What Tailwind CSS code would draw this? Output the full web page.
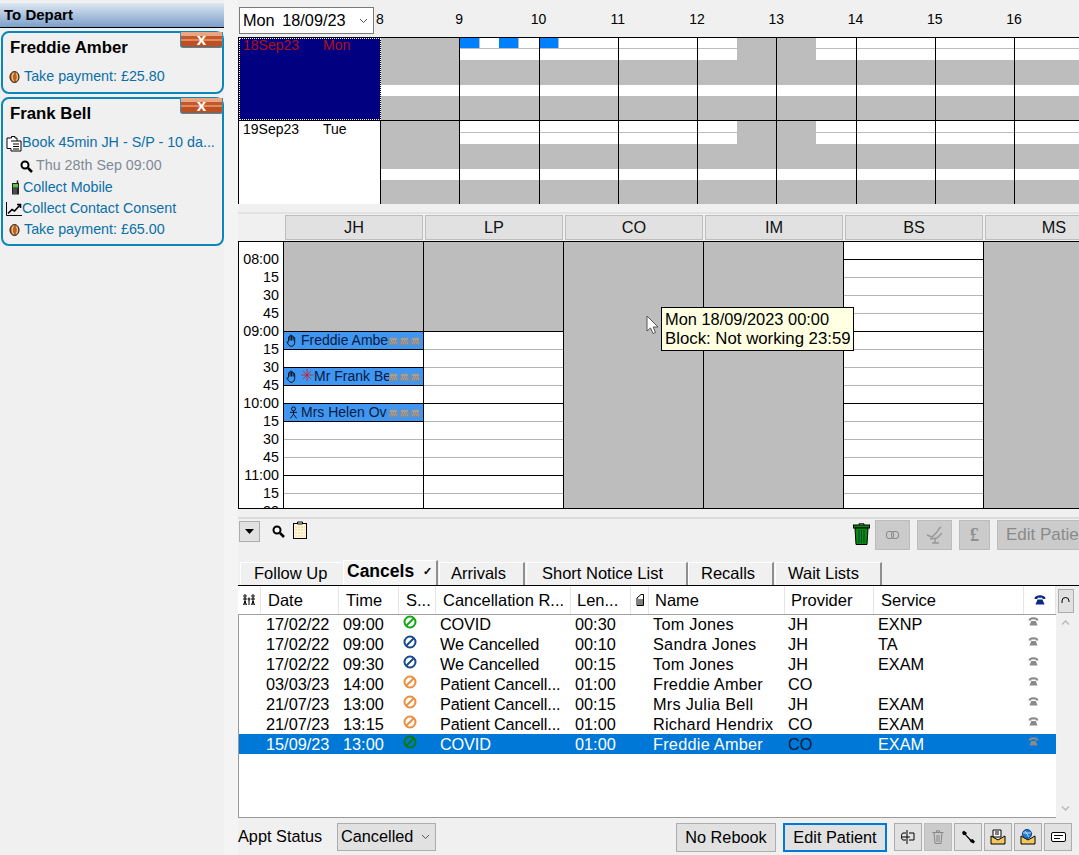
<!DOCTYPE html>
<html lang="en">
<head>
<meta charset="UTF-8">
<title>Appointments</title>
<script src="https://cdn.jsdelivr.net/npm/@tailwindcss/browser@4"></script>
</head>
<body class="w-[1079px] h-[855px] overflow-hidden bg-[#f0f0f0] text-black font-['Liberation_Sans',Arial,sans-serif]">

<svg class="hidden">
  <symbol id="phone" viewBox="0 0 12 10"><path fill="currentColor" d="M.5 4C.5 1 4 .3 6 .3S11.500 1 11.500 4H8.500V2.800H3.500V4ZM3.500 4.500H8.500L10.500 9.500H1.500Z"/></symbol>
  <symbol id="phoneblock" viewBox="0 0 9 8"><path fill="currentColor" d="M0 3C0 1 2.500 0 4.500 0S9 1 9 3V8H0Z"/><path d="M1 2H8M2 4H3M4 4H5M6 4H7M1 6H2M3 6H4M5 6H6M7 6H8" stroke="#b5b5b5"/></symbol>
  <symbol id="coin" viewBox="0 0 12 14"><ellipse cx="6" cy="7" rx="5" ry="6" fill="#b8621e" stroke="#1a1a1a"/><path d="M5 2.500C3 5 3 9 5 11.500M8 3C9.500 5.500 9.500 8.500 8 11" fill="none" stroke="#f3c78e" stroke-width="1.300"/></symbol>
  <symbol id="hand" viewBox="0 0 12 14"><path fill="none" stroke="#000" d="M2.800 8V3.500C2.800 2.400 4.400 2.400 4.400 3.500V1.800C4.400.7 6.100.7 6.100 1.800V2.800C6.100 1.700 7.800 1.700 7.800 2.800V4.200C7.800 3.200 9.500 3.200 9.500 4.200V9C9.500 11.500 8 13.300 5.800 13.300 4 13.300 3 12.300 1.300 9.300.8 8.300 2 7.600 2.800 8.800M4.400 3.500V7M6.100 2.800V7M7.800 4.200V7"/></symbol>
  <symbol id="person" viewBox="0 0 10 14"><g fill="none" stroke="#000"><circle cx="5" cy="3" r="2.200"/><path d="M5 5.200V9M1 6.800H9M5 9L1.500 13.500M5 9L8.500 13.500"/></g></symbol>
  <symbol id="nosign" viewBox="0 0 14 14"><circle cx="7" cy="7" r="5.500" fill="none" stroke="currentColor" stroke-width="2"/><path d="M3.500 10.500L10.500 3.500" stroke="currentColor" stroke-width="2"/></symbol>
</svg>

<div class="flex h-[855px]">
  <!-- to depart panel -->
  <aside class="w-[224px] shrink-0 pt-[3px]">
    <div class="h-[25px] pl-1 flex items-center text-[15px] font-bold bg-gradient-to-b from-[#dfe7f1] to-[#7c9fcb] border-b border-black">To Depart</div>

    <div class="relative mt-[3px] ml-px h-[63px] rounded-lg border-2 border-[#0a86b8] text-[14.300px] text-[#0a6fa8]">
      <button class="absolute -top-[1px] -right-[1px] w-[43px] h-[16px] rounded-b-[3px] border-b border-x border-[#2f8fb8] bg-[linear-gradient(#e9a684_0,#e9a684_25%,#c4582a_25%,#c4582a_45%,#df8a5e_45%,#df8a5e_60%,#bd4f22_60%)] text-white text-[17px] leading-[11px] font-bold">x</button>
      <p class="pl-[7px] pt-[2px] h-[28px] text-[16.800px] font-bold text-black">Freddie Amber</p>
      <div class="flex items-center mt-[6px] h-[20px] pl-[6px]"><svg class="w-[11px] h-[14px] mr-[4px]"><use href="#coin"/></svg>Take payment: £25.80</div>
    </div>

    <div class="relative mt-[3px] ml-px h-[149px] rounded-lg border-2 border-[#0a86b8] text-[14.300px] text-[#0a6fa8]">
      <button class="absolute -top-[1px] -right-[1px] w-[43px] h-[16px] rounded-b-[3px] border-b border-x border-[#2f8fb8] bg-[linear-gradient(#e9a684_0,#e9a684_25%,#c4582a_25%,#c4582a_45%,#df8a5e_45%,#df8a5e_60%,#bd4f22_60%)] text-white text-[17px] leading-[11px] font-bold">x</button>
      <p class="pl-[7px] pt-[2px] h-[28px] text-[16.800px] font-bold text-black">Frank Bell</p>
      <div class="flex items-center mt-[4px] h-[24px] pl-[3px] whitespace-nowrap">
        <svg class="w-[16px] h-[17px]" viewBox="0 0 16 17"><path d="M5.500 3V1.500H9V3H11V6H15V16H5V13.500H1V3Z" fill="#fff" stroke="#000"/><path d="M5 6H11M7 9H13M7 11.500H13M7 14H13" stroke="#000"/></svg>Book 45min JH - S/P - 10 da...</div>
      <div class="flex items-center h-[22px] pl-[17px] text-[#7f8a99]">
        <svg class="w-[13px] h-[13px] mr-[3px]" viewBox="0 0 13 13"><circle cx="5" cy="5" r="3.500" fill="#fff" stroke="#000" stroke-width="2"/><path d="M8 8L12 12" stroke="#000" stroke-width="2.500"/></svg>Thu 28th Sep 09:00</div>
      <div class="flex items-center h-[21px] pl-[8px]">
        <svg class="w-[9px] h-[15px] mr-[3px]" viewBox="0 0 9 15"><rect x="1" y="3" width="7" height="11.500" fill="#222"/><rect x="2" y="4" width="5" height="3.500" fill="#5fbf4a"/><path d="M2.500 9H6.500M2.500 11H6.500M2.500 13H6.500" stroke="#ccc" stroke-dasharray="1 1"/><path d="M6.500 3V.5" stroke="#222" stroke-width="1.500"/></svg>Collect Mobile</div>
      <div class="flex items-center h-[21px] pl-[3px]">
        <svg class="w-[16px] h-[14px]" viewBox="0 0 16 14"><path d="M.5 0V13.500H16" fill="none" stroke="#000"/><path d="M2 11.500L6 7.500L8.500 9L14 3M11 2.500H14.500V6" fill="none" stroke="#000" stroke-width="1.600"/></svg>Collect Contact Consent</div>
      <div class="flex items-center h-[21px] pl-[6px]"><svg class="w-[11px] h-[14px] mr-[4px]"><use href="#coin"/></svg>Take payment: £65.00</div>
    </div>
  </aside>

  <div class="w-[14px] shrink-0 bg-[#f4f4f4]"></div>

  <!-- main column -->
  <main class="relative w-[841px] overflow-hidden">
    <!-- date picker + hour ruler -->
    <div class="flex h-[37px] pt-[7px]">
      <div class="w-[135px] h-[27px] shrink-0 ml-px border border-[#7a7a7a] bg-white flex items-center pl-[3px] text-[16.300px] [word-spacing:3px] whitespace-nowrap">Mon 18/09/23<svg class="w-[9px] h-[6px] ml-auto mr-[5px]" viewBox="0 0 9 6"><path d="M1 1L4.500 4.500L8 1" fill="none" stroke="#555"/></svg></div>
      <div id="hours" class="flex shrink-0 ml-[6px] text-[14px]"></div>
    </div>

    <!-- week rows -->
    <div id="week" class="h-[167px] border-l border-t border-black overflow-hidden"></div>

    <!-- provider headers -->
    <div class="h-[2px] mt-[8px] mb-[1px] bg-[#e2e2e2]"></div>
    <div class="flex gap-[2px] h-[26px] ml-[47px] text-[16.300px] text-[#111]">
      <div class="w-[138px] shrink-0 h-[25px] bg-[#e1e1e1] border border-[#bdbdbd] flex items-center justify-center">JH</div>
      <div class="w-[138px] shrink-0 h-[25px] bg-[#e1e1e1] border border-[#bdbdbd] flex items-center justify-center">LP</div>
      <div class="w-[138px] shrink-0 h-[25px] bg-[#e1e1e1] border border-[#bdbdbd] flex items-center justify-center">CO</div>
      <div class="w-[138px] shrink-0 h-[25px] bg-[#e1e1e1] border border-[#bdbdbd] flex items-center justify-center">IM</div>
      <div class="w-[138px] shrink-0 h-[25px] bg-[#e1e1e1] border border-[#bdbdbd] flex items-center justify-center">BS</div>
      <div class="w-[138px] shrink-0 h-[25px] bg-[#e1e1e1] border border-[#bdbdbd] flex items-center justify-center">MS</div>
    </div>

    <!-- day grid -->
    <div class="flex h-[268px] border border-black border-r-0 bg-white overflow-hidden">
      <div id="times" class="w-[45px] shrink-0 pt-[8px] text-[14.300px] text-right pr-[4px] overflow-hidden border-r border-black"></div>
      <div id="gridJH" class="w-[140px] shrink-0 border-r border-black overflow-hidden"></div>
      <div id="gridLP" class="w-[140px] shrink-0 border-r border-black overflow-hidden"></div>
      <div class="w-[140px] shrink-0 border-r border-black bg-[#bdbdbd]"></div>
      <div class="w-[140px] shrink-0 border-r border-black bg-[#bdbdbd]"></div>
      <div id="gridBS" class="w-[140px] shrink-0 border-r border-black overflow-hidden"></div>
      <div class="flex-1 bg-[#bdbdbd]"></div>
    </div>

    <!-- toolbar -->
    <div class="h-[2px] mt-[8px] bg-[#dcdcdc]"></div>
    <div class="flex h-[41px] pt-[1px]">
      <button class="w-[21px] h-[21px] shrink-0 ml-px mt-[1px] bg-[#e1e1e1] border border-[#adadad] flex items-center justify-center">
        <svg class="w-[9px] h-[5px]" viewBox="0 0 9 5"><path d="M0 0H9L4.500 5Z" fill="#000"/></svg>
      </button>
      <svg class="w-[13px] h-[13px] shrink-0 ml-[12px] mt-[5px]" viewBox="0 0 13 13"><circle cx="5" cy="5" r="3.500" fill="#fff" stroke="#000" stroke-width="2"/><path d="M8 8L12 12" stroke="#000" stroke-width="2.500"/></svg>
      <svg class="w-[14px] h-[18px] shrink-0 ml-[8px] mt-[1px]" viewBox="0 0 14 18"><rect x=".5" y="2.500" width="13" height="15" fill="#fff8dc" stroke="#000"/><path d="M4.500 3V1H9.500V3Z" fill="#fff" stroke="#000"/><path d="M2.500 6H12M2.500 9H12M2.500 12H12M2.500 15H12" stroke="#f0a040" stroke-dasharray="1 2"/></svg>
      <svg class="w-[17px] h-[22px] shrink-0 ml-[546px] mt-[3px]" viewBox="0 0 17 22"><path d="M6 2V.8H11V2" fill="none" stroke="#000"/><rect x=".5" y="2" width="16" height="3" fill="#0a8a0a" stroke="#000"/><path d="M2 5H15L14 21.500H3Z" fill="#0a8a0a" stroke="#000"/><path d="M6 7V20M8.500 7V20M11 7V20" stroke="#044"/></svg>
      <button class="w-[35px] h-[30px] shrink-0 ml-[5px] bg-[#cbcbcb] border border-[#bcbcbc] flex items-center justify-center">
        <svg class="w-[13px] h-[8px]" viewBox="0 0 13 8"><rect x=".5" y=".5" width="7" height="7" rx="2.500" fill="none" stroke="#888"/><rect x="5.500" y=".5" width="7" height="7" rx="2.500" fill="none" stroke="#888"/></svg>
      </button>
      <button class="w-[35px] h-[30px] shrink-0 ml-[7px] bg-[#cbcbcb] border border-[#bcbcbc] flex items-center justify-center">
        <svg class="w-[20px] h-[20px]" viewBox="0 0 20 20"><path d="M16 2C14 3 13 5 12 7L7 12L2 10M5 14L12 13L17 8M7 18H14M10 14V18" fill="none" stroke="#999" stroke-width="1.500"/></svg>
      </button>
      <button class="w-[31px] h-[30px] shrink-0 ml-[7px] bg-[#cbcbcb] border border-[#bcbcbc] text-[#8f8f8f] text-[18px] font-bold font-['Liberation_Serif',serif]">£</button>
      <button class="w-[100px] h-[30px] shrink-0 ml-[7px] bg-[#cbcbcb] border border-[#bcbcbc] text-[#8a8a8a] text-[17px] text-left pl-[8px] whitespace-nowrap">Edit Patient</button>
    </div>

    <!-- list tabs -->
    <div class="flex items-end h-[26px] pl-[2px] border-b border-black text-[16.500px]">
      <div class="w-[103px] h-[23px] pl-[13px] leading-[21px] border-t border-l border-white border-r-2 border-r-[#f0f0f0]">Follow Up</div>
      <div class="w-[95px] h-[25px] pl-[3px] leading-[21px] text-[17.500px] font-bold border-t border-l border-white border-r-2 border-r-[#8f8f8f] flex gap-[9px] bg-[#f4f4f4]">Cancels<span class="text-[11px]">✓</span></div>
      <div class="w-[86px] h-[23px] ml-px pl-[11px] leading-[21px] border-t border-l border-white border-r-2 border-r-[#8f8f8f]">Arrivals</div>
      <div class="w-[162px] h-[23px] ml-px pl-[15px] leading-[21px] border-t border-l border-white border-r-2 border-r-[#8f8f8f] whitespace-nowrap">Short Notice List</div>
      <div class="w-[86px] h-[23px] pl-[12px] leading-[21px] border-t border-l border-white border-r-2 border-r-[#8f8f8f]">Recalls</div>
      <div class="w-[107px] h-[23px] ml-px pl-[12px] leading-[21px] border-t border-l border-white border-r-2 border-r-[#8f8f8f]">Wait Lists</div>
    </div>

    <!-- cancels list -->
    <div class="flex">
      <div class="w-[818px] shrink-0">
        <div class="flex h-[29px] bg-white border-b border-[#a0a0a0] text-[16.500px] items-center whitespace-nowrap">
          <div class="w-[23px] h-full border-r border-[#e5e5e5] flex items-center justify-center">
            <svg class="w-[14px] h-[12px]" viewBox="0 0 14 12"><g fill="none" stroke="#000"><circle cx="3" cy="2" r="1.200"/><circle cx="11" cy="2" r="1.200"/><circle cx="7" cy="5" r="1"/><path d="M3 3V11M1 5H5M1.500 11L3 7L4.500 11M11 3V11M9 5H13M9.500 11L11 7L12.500 11M7 6V11"/></g></svg>
          </div>
          <div class="w-[78px] h-full pl-[7px] leading-[28px] border-r border-[#e5e5e5]">Date</div>
          <div class="w-[60px] h-full pl-[7px] leading-[28px] border-r border-[#e5e5e5]">Time</div>
          <div class="w-[37px] h-full pl-[7px] leading-[28px] border-r border-[#e5e5e5]">S...</div>
          <div class="w-[135px] h-full pl-[7px] leading-[28px] border-r border-[#e5e5e5]">Cancellation R...</div>
          <div class="w-[60px] h-full pl-[6px] leading-[28px] border-r border-[#e5e5e5]">Len...</div>
          <div class="w-[18px] h-full border-r border-[#e5e5e5] flex items-center justify-center">
            <svg class="w-[8px] h-[12px]" viewBox="0 0 8 12"><path d="M5 .5L1 4V11.500H7.500V.5ZM2 6H7M2 8H7M2 10H7" fill="none" stroke="#000"/></svg>
          </div>
          <div class="w-[136px] h-full pl-[6px] leading-[28px] border-r border-[#e5e5e5]">Name</div>
          <div class="w-[89px] h-full pl-[6px] leading-[28px] border-r border-[#e5e5e5]">Provider</div>
          <div class="w-[150px] h-full pl-[7px] leading-[28px] border-r border-[#e5e5e5]">Service</div>
          <div class="w-[32px] h-full flex items-center justify-center text-[#0a2a8a] border-r border-[#e5e5e5]"><svg class="w-[12px] h-[10px]"><use href="#phone"/></svg></div>
        </div>
        <div class="h-[203px] bg-white border-l border-b border-[#9a9a9a] overflow-hidden">
          <div id="rows" class="-mt-px text-[16.300px] whitespace-nowrap"></div>
        </div>
      </div>
      <div class="w-[17px] ml-px shrink-0 flex flex-col items-center">
        <button class="w-[16px] h-[24px] mt-[3px] bg-[#e1e1e1] border border-[#adadad] flex items-center justify-center">
          <svg class="w-[9px] h-[8px]" viewBox="0 0 9 8"><path d="M1 6V4A3.500 3.500 0 0 1 8 4V5" fill="none" stroke="#000"/></svg>
        </button>
        <svg class="w-[9px] h-[5px] mt-[7px]" viewBox="0 0 9 5"><path d="M1 4.500L4.500 1L8 4.500" fill="none" stroke="#bbb" stroke-width="1.500"/></svg>
        <svg class="w-[9px] h-[5px] mt-[181px]" viewBox="0 0 9 5"><path d="M1 .5L4.500 4L8 .5" fill="none" stroke="#bbb" stroke-width="1.500"/></svg>
      </div>
    </div>

    <!-- bottom bar -->
    <div class="flex items-center h-[30px] mt-[4px] pr-[7px] text-[16.300px]">
      <span class="w-[99px] -mt-[2px]">Appt Status</span>
      <div class="w-[99px] h-[28px] -mt-[1px] bg-[#e1e1e1] border border-[#adadad] flex items-center pl-[3px]">Cancelled<svg class="w-[9px] h-[6px] ml-auto mr-[5px]" viewBox="0 0 9 6"><path d="M1 1L4.500 4.500L8 1" fill="none" stroke="#555"/></svg></div>
      <button class="w-[100px] h-[29px] ml-auto bg-[#e1e1e1] border border-[#adadad]">No Rebook</button>
      <button class="w-[104px] h-[29px] ml-[7px] bg-[#e1e1e1] border-2 border-[#0078d7]">Edit Patient</button>
      <button class="w-[28px] h-[28px] ml-[7px] bg-[#e1e1e1] border border-[#adadad] flex items-center justify-center">
        <svg class="w-[14px] h-[14px]" viewBox="0 0 14 14"><path d="M6 0V14M0 7H9M5 3H2C0 3 0 10 2 10H5M8 3H13V10H8" fill="none" stroke="#000"/></svg>
      </button>
      <button class="w-[28px] h-[28px] ml-[2px] bg-[#cbcbcb] border border-[#bcbcbc] flex items-center justify-center">
        <svg class="w-[12px] h-[14px]" viewBox="0 0 12 14"><path d="M.5 2.500H11.500M2 3L3 13.500H9L10 3M4.500 2V.8H7.500V2M5 5V12M7 5V12" fill="none" stroke="#888"/></svg>
      </button>
      <button class="w-[28px] h-[28px] ml-[2px] bg-[#e1e1e1] border border-[#adadad] flex items-center justify-center">
        <svg class="w-[15px] h-[14px]" viewBox="0 0 15 14"><path d="M1 2L3 .8L6 3L5 4.500L10 9.500L11.500 9L14 11.500L12.500 13.500L9.500 12L8.500 10L4 5L2 5Z" fill="#000"/></svg>
      </button>
      <button class="w-[28px] h-[28px] ml-[2px] bg-[#e1e1e1] border border-[#adadad] flex items-center justify-center">
        <svg class="w-[16px] h-[16px]" viewBox="0 0 16 16"><path d="M3 1H11V8H3Z" fill="#fff" stroke="#000"/><path d="M5 3H9M5 5H9" stroke="#000"/><path d="M1 7L8 11L15 7V15H1Z" fill="#f3c75a" stroke="#000"/></svg>
      </button>
      <button class="w-[28px] h-[28px] ml-[2px] bg-[#e1e1e1] border border-[#adadad] flex items-center justify-center">
        <svg class="w-[16px] h-[16px]" viewBox="0 0 16 16"><path d="M1 7L8 11L15 7V15H1Z" fill="#f3c75a" stroke="#000"/><circle cx="7" cy="5" r="4.500" fill="#1f7ad0" stroke="#0a3a7a"/><path d="M3 4H11M5 2L9 8" stroke="#bfe0ff"/></svg>
      </button>
      <button class="w-[28px] h-[28px] ml-[2px] bg-[#e1e1e1] border border-[#adadad] flex items-center justify-center">
        <svg class="w-[15px] h-[10px]" viewBox="0 0 15 10"><rect x=".5" y=".5" width="14" height="9" rx="1.500" fill="#fff" stroke="#000"/><path d="M3 3.500H12M3 6.500H9" stroke="#000"/></svg>
      </button>
    </div>

    <!-- hover tooltip over the grid, with pointer -->
    <svg class="absolute left-[408px] top-[315px] w-[14px] h-[20px]" viewBox="0 0 14 20"><path d="M1 1V16L4.500 13L7 18.500L9.500 17.500L7.200 12H12Z" fill="#fff" stroke="#555"/></svg>
    <div class="absolute left-[423px] top-[307px] w-[193px] h-[44px] pl-[3px] pt-px bg-[#ffffe1] border border-black text-[16.400px] leading-[20px] whitespace-nowrap">
      <div>Mon 18/09/2023 00:00</div>
      <div class="text-[16.800px]">Block: Not working 23:59</div>
    </div>
  </main>
</div>

<script>
// hour ruler
var hourBox = document.getElementById("hours");
[8, 9, 10, 11, 12, 13, 14, 15, 16].forEach(function(h) {
    hourBox.innerHTML += '<div class="w-[79.250px] shrink-0 leading-[24px]"><span class="inline-block -translate-x-1/2">' + h + '</span></div>';
});

// week rows: quarter hours from 8:00, g = not working, b = booked
// the first row sits under the 1px top border so its first band is 1px shorter
function quarter(kind, first) {
    var band = first ? "flex-1 h-[22px] " : "flex-1 h-[23px] ";
    var top = first ? "h-[10px] " : "h-[11px] ";
    if (kind == "g") return '<div class="' + band + 'bg-[#bdbdbd]"></div>';
    if (kind == "b") return '<div class="' + band + 'bg-white"><div class="' + top + 'bg-[#0080ff] border-r border-[#bdbdbd]"></div><div class="border-t border-[#bdbdbd]"></div></div>';
    return '<div class="' + band + 'bg-white"><div class="' + top + '"></div><div class="border-t border-[#bdbdbd]"></div></div>';
}
function weekRow(label, day, first, pattern) {
    var labelCls = first
        ? "w-[142px] shrink-0 h-full bg-[#000080] text-[#b01010] outline-1 outline-dotted outline-white -outline-offset-1 border-r border-black flex leading-[14px] pl-[4px] gap-[24px]"
        : "w-[142px] shrink-0 h-full bg-white text-black border-r border-black flex leading-[16px] pl-[4px] gap-[24px]";
    var rowCls = first ? "flex h-[83px] border-b border-black text-[14px]" : "flex h-[84px] border-b border-black text-[14px]";
    var html = '<div class="' + rowCls + '"><div class="' + labelCls + '"><span class="w-[56px]">' + label + '</span><span>' + day + '</span></div>';
    for (var h = 0; h < 9; h++) {
        html += '<div class="w-[79.250px] shrink-0 border-r border-black flex flex-col"><div class="flex">';
        for (var q = 0; q < 4; q++) html += quarter(pattern[h][q], first);
        html += '</div><div class="h-[25px] bg-[#bdbdbd]"></div><div class="h-[11px] bg-white"></div><div class="flex-1 bg-[#bdbdbd]"></div></div>';
    }
    return html + '</div>';
}
var plain = ["gggg", "----", "----", "----", "--gg", "gg--", "----", "----", "----"];
var booked = ["gggg", "b-b-", "b---", "----", "--gg", "gg--", "----", "----", "----"];
document.getElementById("week").innerHTML =
    weekRow("18Sep23", "Mon", true, booked) + weekRow("19Sep23", "Tue", false, plain);

// time labels
var times = document.getElementById("times");
["08:00","15","30","45","09:00","15","30","45","10:00","15","30","45","11:00","15","30"].forEach(function(t) {
    times.innerHTML += '<div class="h-[18px] leading-[18px]">' + t + '</div>';
});

// day grid columns, first slot is the tail of 07:45
var phones = '<span class="ml-auto mr-[3px] flex gap-[2px] text-[#8a8a8a]"><svg class="w-[9px] h-[8px]"><use href="#phoneblock"/></svg><svg class="w-[9px] h-[8px]"><use href="#phoneblock"/></svg><svg class="w-[9px] h-[8px]"><use href="#phoneblock"/></svg></span>';
function appt(icons, name, nameW) {
    return '<div class="h-[18px] bg-[#3f97f2] border-t border-black flex items-center pl-[2px] text-[14px] text-[#0a1a40] whitespace-nowrap">' + icons +
        '<span class="overflow-hidden ' + nameW + '">' + name + '</span>' + phones + '</div>';
}
var hand = '<svg class="w-[11px] h-[13px] mr-[4px] shrink-0"><use href="#hand"/></svg>';
var person = '<svg class="w-[9px] h-[13px] ml-[3px] mr-[3px] shrink-0"><use href="#person"/></svg>';
var star = '<svg class="w-[12px] h-[13px] mr-px -mt-[3px] shrink-0" viewBox="0 0 12 13"><path d="M6 0V12M0 6H12M2 2L10 10M10 2L2 10" stroke="#d01818" stroke-width=".8"/></svg>';
var slotDark = '<div class="h-[18px] border-t border-black"></div>';
var slotLight = '<div class="h-[18px] border-t border-[#b4b4b4]"></div>';

function slots(count, startQuarter) {
    var html = "";
    for (var i = 0; i < count; i++) html += (startQuarter + i) % 4 == 0 ? slotDark : slotLight;
    return html;
}
var greyTop = '<div class="h-[89px] bg-[#bdbdbd]"></div>';
document.getElementById("gridJH").innerHTML = greyTop +
    appt(hand, "Freddie Amber", "w-[88px]") + slotDark +
    appt(hand + star, "Mr Frank Bell", "w-[77px]") + slotDark +
    appt(person, "Mrs Helen Ovens", "w-[86px]") + slotDark + slots(5, 2);
document.getElementById("gridLP").innerHTML = greyTop + slots(10, 0);
document.getElementById("gridBS").innerHTML = '<div class="h-[17px]"></div>' + slots(15, 0);

// cancellation rows
var rows = [
    ["17/02/22","09:00","text-[#12a812]","COVID","00:30","Tom Jones","JH","EXNP"],
    ["17/02/22","09:00","text-[#164a8c]","We Cancelled","00:10","Sandra Jones","JH","TA"],
    ["17/02/22","09:30","text-[#164a8c]","We Cancelled","00:15","Tom Jones","JH","EXAM"],
    ["03/03/23","14:00","text-[#ee8c3c]","Patient Cancell...","01:00","Freddie Amber","CO",""],
    ["21/07/23","13:00","text-[#ee8c3c]","Patient Cancell...","00:15","Mrs Julia Bell","JH","EXAM"],
    ["21/07/23","13:15","text-[#ee8c3c]","Patient Cancell...","01:00","Richard Hendrix","CO","EXAM"],
    ["15/09/23","13:00","text-[#0a7a0a]","COVID","01:00","Freddie Amber","CO","EXAM"]
];
var rowBox = document.getElementById("rows");
rows.forEach(function(r, i) {
    var sel = i == rows.length - 1;
    rowBox.innerHTML += '<div class="flex h-[20px] leading-[20px] ' + (sel ? "bg-[#0078d7] text-white" : "") + '">' +
        '<div class="w-[22px]"></div>' +
        '<div class="w-[78px] pl-[5px]">' + r[0] + '</div>' +
        '<div class="w-[60px] pl-[4px]">' + r[1] + '</div>' +
        '<div class="w-[37px] pl-[4px] ' + r[2] + '"><svg class="w-[14px] h-[14px] mt-px"><use href="#nosign"/></svg></div>' +
        '<div class="w-[135px] pl-[4px] tracking-[-0.150px]">' + r[3] + '</div>' +
        '<div class="w-[60px] pl-[4px]">' + r[4] + '</div>' +
        '<div class="w-[18px]"></div>' +
        '<div class="w-[136px] pl-[4px] tracking-[0.250px]">' + r[5] + '</div>' +
        '<div class="w-[89px] pl-[3px] ' + (sel ? "text-[#0a1a40]" : "") + '">' + r[6] + '</div>' +
        '<div class="w-[150px] pl-[4px]">' + r[7] + '</div>' +
        '<div class="w-[32px] pl-[4px] text-[#8a8a8a]"><svg class="w-[11px] h-[9px] mt-[3px]"><use href="#phone"/></svg></div>' +
        '</div>';
});
</script>
</body>
</html>
